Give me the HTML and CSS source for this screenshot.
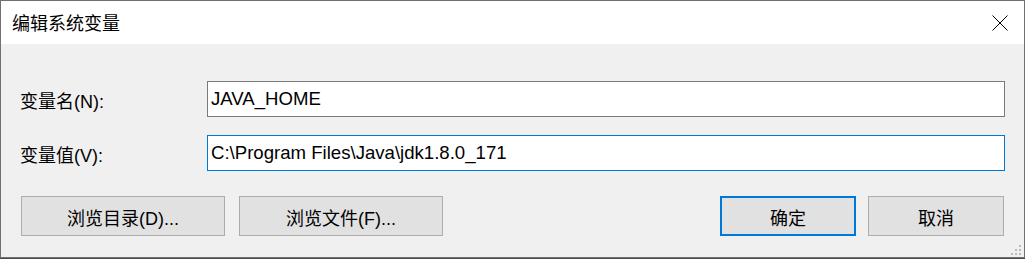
FILE: index.html
```html
<!DOCTYPE html>
<html lang="zh-CN">
<head>
    <meta charset="UTF-8">
    <meta name="viewport" content="width=device-width, initial-scale=1.0">
    <title>编辑系统变量</title>
    <link rel="stylesheet" href="styles.css">
</head>
<body>
    <div class="window">
        <div class="titlebar">
            <span class="title">编辑系统变量</span>
            <button class="close" type="button" aria-label="关闭">
                <svg width="16" height="16" viewBox="0 0 16 16">
                    <path d="M0.5 0.5 L15.5 15.5 M15.5 0.5 L0.5 15.5" stroke="#000" stroke-width="1" fill="none"/>
                </svg>
            </button>
        </div>

        <form class="content">
            <div class="fields">
                <label for="var_name">变量名(N):</label>
                <input type="text" id="var_name" class="field" value="JAVA_HOME">

                <label for="var_value">变量值(V):</label>
                <input type="text" id="var_value" class="field focused" value="C:\Program Files\Java\jdk1.8.0_171">
            </div>

            <div class="actions">
                <button type="button" class="btn wide">浏览目录(D)...</button>
                <button type="button" class="btn wide">浏览文件(F)...</button>
                <span class="spacer"></span>
                <button type="submit" class="btn default">确定</button>
                <button type="button" class="btn">取消</button>
            </div>
        </form>

        <div class="grip">
            <i></i><i></i><i></i><i></i><i></i><i></i>
        </div>
    </div>
</body>
</html>
```

FILE: styles.css
```css
html, body {
    margin: 0;
    padding: 0;
}
body {
    background-color: #4a4a4a;
    font-family: "Liberation Sans", "Noto Sans CJK SC", sans-serif;
    font-size: 18px;
    color: #000;
    height: 259px;
    overflow: hidden;
}
.window {
    position: relative;
    box-sizing: border-box;
    width: 1025px;
    height: 258px;
    border: 1px solid #707070;
    background-color: #f0f0f0;
}
.titlebar {
    display: flex;
    align-items: center;
    height: 43px;
    background: #fff;
    padding-left: 11px;
    padding-right: 16px;
}
.title {
    flex: 1;
    line-height: 20px;
    padding-top: 2px;
}
.close {
    display: flex;
    border: none;
    background: none;
    padding: 0;
    margin: 0;
    width: 16px;
    height: 16px;
    margin-top: 1px;
}
.content {
    padding: 37px 19px 0 19px;
}
.fields {
    display: grid;
    grid-template-columns: 187px 1fr;
    row-gap: 18px;
    align-items: center;
}
.fields label {
    padding-top: 2px;
}
.field {
    box-sizing: border-box;
    height: 36px;
    margin: 0;
    padding: 0 3px;
    border: 1px solid #7a7a7a;
    background: #fff;
    font-family: inherit;
    font-size: 18.6px;
    color: #000;
    outline: none;
}
.field.focused {
    border-color: #0078d7;
}
.actions {
    display: flex;
    align-items: center;
    margin-top: 25px;
    padding-left: 1px;
    padding-right: 1px;
    gap: 14px;
}
.spacer {
    flex: 1;
}
.btn {
    box-sizing: border-box;
    width: 136px;
    height: 40px;
    margin: 0;
    padding: 1px 0 0 0;
    border: 1px solid #adadad;
    background: #e1e1e1;
    font-family: inherit;
    font-size: 18px;
    color: #000;
}
.btn.wide {
    width: 204px;
}
.btn.default {
    border: 2px solid #0078d7;
    margin-right: -2px;
}
.grip {
    position: absolute;
    right: 3px;
    bottom: 2px;
    width: 10px;
    height: 10px;
    display: grid;
    grid-template-columns: repeat(3, 2px);
    grid-template-rows: repeat(3, 2px);
    gap: 2px;
}
.grip i {
    background: #bcbcbc;
}
.grip i:nth-child(1) { grid-column: 3; grid-row: 1; }
.grip i:nth-child(2) { grid-column: 2; grid-row: 2; }
.grip i:nth-child(3) { grid-column: 3; grid-row: 2; }
.grip i:nth-child(4) { grid-column: 1; grid-row: 3; }
.grip i:nth-child(5) { grid-column: 2; grid-row: 3; }
.grip i:nth-child(6) { grid-column: 3; grid-row: 3; }
```
